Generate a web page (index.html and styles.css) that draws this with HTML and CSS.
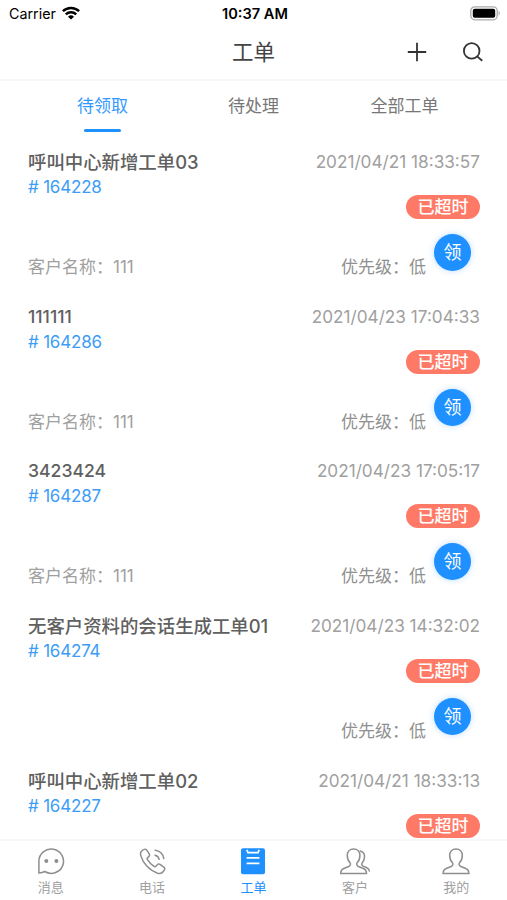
FILE: index.html
```html
<!DOCTYPE html>
<html lang="zh-CN">
<head>
  <meta charset="utf-8">
  <meta name="viewport" content="width=device-width, initial-scale=1">
  <title>工单</title>
  <link rel="stylesheet" href="styles.css">
</head>
<body>
  <div class="app">
    <div class="status-bar">
      <div class="carrier">
        <span>Carrier</span>
        <svg class="wifi" width="18" height="14" viewBox="0 0 18 14" fill="none" stroke="#000" stroke-width="2.5">
          <path d="M0.9 5.2a11.6 11.6 0 0 1 16.2 0"/>
          <path d="M3.8 8.3a7.5 7.5 0 0 1 10.4 0"/>
          <path d="M9 13.6L6 10.7a4.3 4.3 0 0 1 6 0z" fill="#000" stroke="none"/>
        </svg>
      </div>
      <div class="clock">10:37 AM</div>
      <svg class="battery" width="31" height="15" viewBox="0 0 31 15">
        <rect x="0.8" y="0.8" width="26.4" height="13" rx="4" fill="#fff" stroke="#aaa" stroke-width="1.3"/>
        <rect x="2.8" y="2.8" width="22.4" height="9" rx="2" fill="#000"/>
        <path d="M28.6 5v4.6c1.6-.5 1.6-4.1 0-4.6z" fill="#aaa"/>
      </svg>
    </div>

    <div class="nav">
      <div class="nav-title">工单</div>
      <div class="nav-actions">
        <svg width="20" height="20" viewBox="0 0 20 20" fill="none" stroke="#333" stroke-width="1.8">
          <path d="M10 .8v18.4M.8 10h18.4"/>
        </svg>
        <svg width="20" height="20" viewBox="0 0 20 20" fill="none" stroke="#333" stroke-width="1.8">
          <circle cx="8.7" cy="8.9" r="7.8"/>
          <path d="M14.2 14.4l5 4.4"/>
        </svg>
      </div>
    </div>

    <div class="tabs">
      <div class="tab active">待领取</div>
      <div class="tab">待处理</div>
      <div class="tab">全部工单</div>
    </div>

    <div class="list">
      <div class="ticket">
        <div class="ticket-main">
          <div class="ticket-title">呼叫中心新增工单03</div>
          <div class="ticket-id"># 164228</div>
          <div class="customer">客户名称：111</div>
        </div>
        <div class="ticket-side">
          <div class="date">2021/04/21 18:33:57</div>
          <div class="badge">已超时</div>
          <div class="ticket-foot">
            <span class="priority">优先级：低</span>
            <button class="claim">领</button>
          </div>
        </div>
      </div>

      <div class="ticket">
        <div class="ticket-main">
          <div class="ticket-title numeric">111111</div>
          <div class="ticket-id"># 164286</div>
          <div class="customer">客户名称：111</div>
        </div>
        <div class="ticket-side">
          <div class="date">2021/04/23 17:04:33</div>
          <div class="badge">已超时</div>
          <div class="ticket-foot">
            <span class="priority">优先级：低</span>
            <button class="claim">领</button>
          </div>
        </div>
      </div>

      <div class="ticket">
        <div class="ticket-main">
          <div class="ticket-title numeric">3423424</div>
          <div class="ticket-id"># 164287</div>
          <div class="customer">客户名称：111</div>
        </div>
        <div class="ticket-side">
          <div class="date">2021/04/23 17:05:17</div>
          <div class="badge">已超时</div>
          <div class="ticket-foot">
            <span class="priority">优先级：低</span>
            <button class="claim">领</button>
          </div>
        </div>
      </div>

      <div class="ticket">
        <div class="ticket-main">
          <div class="ticket-title">无客户资料的会话生成工单01</div>
          <div class="ticket-id"># 164274</div>
        </div>
        <div class="ticket-side">
          <div class="date">2021/04/23 14:32:02</div>
          <div class="badge">已超时</div>
          <div class="ticket-foot">
            <span class="priority">优先级：低</span>
            <button class="claim">领</button>
          </div>
        </div>
      </div>

      <div class="ticket">
        <div class="ticket-main">
          <div class="ticket-title">呼叫中心新增工单02</div>
          <div class="ticket-id"># 164227</div>
        </div>
        <div class="ticket-side">
          <div class="date">2021/04/21 18:33:13</div>
          <div class="badge">已超时</div>
        </div>
      </div>
    </div>

    <div class="tabbar">
      <div class="tabbar-item">
        <svg width="28" height="28" viewBox="0 0 28 28" fill="none" stroke="#8e8e8e" stroke-width="1.5">
          <path d="M1.9 26.1V14.2A12.3 12.1 0 1 1 7.7 24.5C6 25.5 4 25.9 1.9 26.1z" stroke-linejoin="round"/>
          <circle cx="9.3" cy="13.9" r="2" fill="#8e8e8e" stroke="none"/>
          <circle cx="19.4" cy="13.9" r="2" fill="#8e8e8e" stroke="none"/>
        </svg>
        <span>消息</span>
      </div>
      <div class="tabbar-item">
        <svg width="28" height="28" viewBox="0 0 28 28" fill="none" stroke="#8e8e8e" stroke-width="1.5" stroke-linecap="round" stroke-linejoin="round">
          <path d="M6.2 2.4C3.4 3.5 2 5.8 2.8 8.6C5 16.4 11.6 23.6 19.6 26.2C22.7 27.1 25.2 25.4 26.5 22.7C27 21.7 26.7 20.8 25.8 20.1L22 17.4C20.9 16.7 19.9 16.9 19.1 17.9L18 19.1C17.3 19.8 16.5 19.8 15.7 19.2C13.2 17.4 11 15 9.5 12.6C9 11.8 9.1 11 9.9 10.4L10.8 9.6C11.7 8.8 11.8 7.9 11.2 6.9L9 3.3C8.3 2.2 7.4 1.9 6.2 2.4z"/>
          <path d="M17 8.2c2.2.4 3.7 1.9 4.2 4.1M17.1 3.2c4.7.6 7.9 3.8 8.7 8.3"/>
        </svg>
        <span>电话</span>
      </div>
      <div class="tabbar-item active">
        <svg width="28" height="28" viewBox="0 0 28 28" fill="none">
          <rect x="2" y="1.2" width="24" height="26" rx="2" fill="#1e90ff"/>
          <path d="M7.8 2.8l1.2 2.8h10l1.2-2.8M7.6 10.9h12.8M7.6 16.4h12.8" stroke="#fff" stroke-width="1.7"/>
        </svg>
        <span>工单</span>
      </div>
      <div class="tabbar-item">
        <svg width="32" height="28" viewBox="0 0 32 28" fill="none" stroke="#8e8e8e" stroke-width="1.5" stroke-linecap="round" stroke-linejoin="round">
          <path d="M14.6 2C10.8 2 8.3 4.6 8.3 8.4C8.3 11.5 9.3 14 11 15.7C12 17.2 11.5 18.7 9.7 19.5L4.8 21.5C2.5 22.5 1.6 24 1.7 26.6H27.5C27.6 24 26.7 22.5 24.4 21.5L19.5 19.5C17.7 18.7 17.2 17.2 18.2 15.7C19.9 14 20.9 11.5 20.9 8.4C20.9 4.6 18.4 2 14.6 2z"/>
          <path d="M21.2 4c3.1.8 4.6 3.2 4.3 6.4c-.2 2.3-1 4.1-2.3 5.4c-.9 1.4-.5 2.5 1 3.3l3.1 1.4c2 1 2.9 1.6 3.1 3.5"/>
        </svg>
        <span>客户</span>
      </div>
      <div class="tabbar-item">
        <svg width="28" height="28" viewBox="0 0 28 28" fill="none" stroke="#8e8e8e" stroke-width="1.5" stroke-linejoin="round">
          <path d="M14 2C10.2 2 7.7 4.6 7.7 8.4C7.7 11.5 8.7 14 10.4 15.7C11.4 17.2 10.9 18.7 9.1 19.5L4.2 21.5C1.9 22.5 1 24 1.1 26.6H26.9C27 24 26.1 22.5 23.8 21.5L18.9 19.5C17.1 18.7 16.6 17.2 17.6 15.7C19.3 14 20.3 11.5 20.3 8.4C20.3 4.6 17.8 2 14 2z"/>
        </svg>
        <span>我的</span>
      </div>
    </div>
  </div>
</body>
</html>
```

FILE: styles.css
```css
* {
  box-sizing: border-box;
}

body {
  margin: 0;
  background: #fff;
  color: #555;
  font-family: Inter, "Noto Sans CJK SC", sans-serif;
}

svg {
  display: block;
}

.app {
  display: flex;
  flex-direction: column;
  height: 900px;
  overflow: hidden;
}

.status-bar {
  display: grid;
  grid-template-columns: 1fr auto 1fr;
  align-items: center;
  flex: none;
  height: 27px;
  padding: 0 6px 0 9px;
  color: #000;
}

.carrier {
  display: flex;
  align-items: center;
  gap: 6px;
  font-size: 14.3px;
}

.wifi {
  margin-bottom: 2px;
}

.clock {
  font-size: 14.6px;
  font-weight: 600;
}

.battery {
  justify-self: end;
}

.nav {
  display: grid;
  grid-template-columns: 1fr auto 1fr;
  align-items: center;
  flex: none;
  height: 54px;
  padding: 0 24px 2px;
  border-bottom: 2px solid #f8f8f8;
}

.nav-title {
  grid-column: 2;
  font-size: 21.5px;
  line-height: 30px;
  color: #444;
}

.nav-actions {
  display: flex;
  justify-content: flex-end;
  gap: 36px;
}

.tabs {
  display: grid;
  grid-template-columns: repeat(3, 1fr);
  flex: none;
  height: 51px;
  padding: 0 27px;
}

.tab {
  display: flex;
  flex-direction: column;
  align-items: center;
  justify-content: space-between;
  padding-top: 12px;
  font-size: 17px;
  line-height: 26px;
  color: #777;
}

.tab.active {
  color: #3399ff;
}

.tab.active::after {
  content: "";
  width: 37px;
  height: 3px;
  border-radius: 2px;
  background: #1e90ff;
}

.list {
  flex: 1;
  min-height: 0;
  padding: 17px 27px 0 28px;
  overflow: hidden;
}

.ticket {
  display: flex;
  justify-content: space-between;
  height: 154.7px;
  font-size: 17px;
  line-height: 25px;
  white-space: nowrap;
}

.ticket-title {
  font-size: 18.4px;
  font-weight: 500;
  line-height: 26px;
  color: #606060;
}

.ticket-title.numeric {
  font-size: 17.6px;
}

.ticket-id {
  color: #3d9cf7;
  letter-spacing: -0.2px;
}

.customer {
  margin-top: 55px;
  color: #a0a0a0;
}

.ticket-side {
  display: flex;
  flex-direction: column;
  align-items: flex-end;
}

.date {
  color: #a0a0a0;
  font-size: 17.2px;
}

.badge {
  width: 74px;
  height: 24px;
  margin-top: 21px;
  border-radius: 12px;
  background: #ff7a66;
  color: #fff;
  font-weight: 500;
  line-height: 24px;
  text-align: center;
}

.ticket-foot {
  display: flex;
  gap: 8px;
  margin-top: 15px;
  padding-right: 9px;
}

.priority {
  padding-top: 21px;
  color: #909090;
}

.claim {
  width: 37px;
  height: 37px;
  padding: 0;
  border: none;
  border-radius: 50%;
  background: #1e90ff;
  box-shadow: 0 0 6px rgba(30, 144, 255, 0.3);
  color: #fff;
  font-family: inherit;
  font-size: 18px;
  line-height: 37px;
}

.tabbar {
  display: grid;
  grid-template-columns: repeat(5, 1fr);
  flex: none;
  height: 61px;
  border-top: 2px solid #f8f8f8;
}

.tabbar-item {
  display: flex;
  flex-direction: column;
  align-items: center;
  gap: 2px;
  padding-top: 6px;
  font-size: 13px;
  line-height: 20px;
  color: #a0a0a0;
}

.tabbar-item.active {
  color: #1e90ff;
}
```
